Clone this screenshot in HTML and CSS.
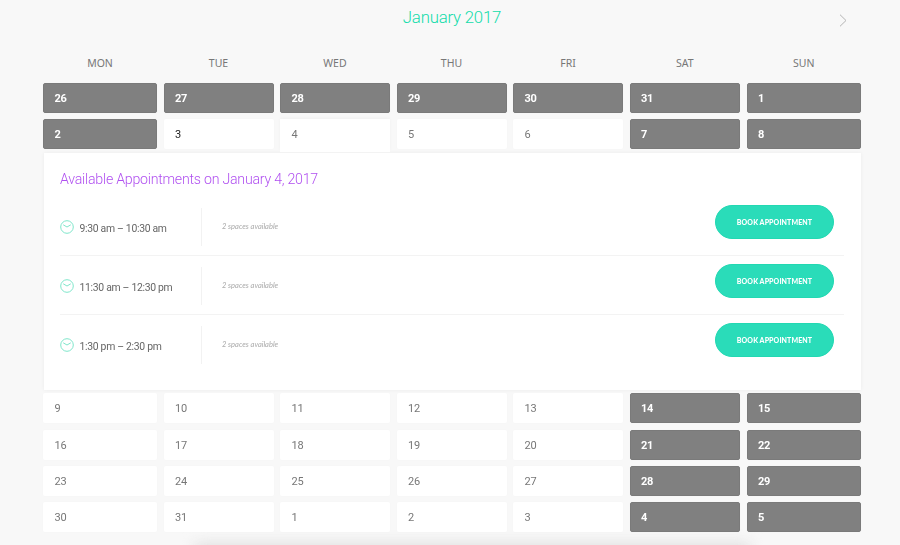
FILE: index.html
```html
<!DOCTYPE html>
<html lang="en">
<head>
<meta charset="utf-8">
<title>January 2017</title>
<link rel="stylesheet" href="styles.css">
</head>
<body>
<main class="page">
  <header class="month">
    <span class="month-spacer"></span>
    <h1 class="month-title">January 2017</h1>
    <svg class="month-next" width="8" height="13" viewBox="0 0 8 13"><path d="M1 .7l6 5.8-6 5.8" fill="none" stroke="#b4b4b4" stroke-width="1"/></svg>
  </header>
  <div class="weekdays">
    <span>MON</span><span>TUE</span><span>WED</span><span>THU</span><span>FRI</span><span>SAT</span><span>SUN</span>
  </div>
  <section class="calendar">
    <div class="cell off">26</div><div class="cell off">27</div><div class="cell off">28</div><div class="cell off">29</div><div class="cell off">30</div><div class="cell off">31</div><div class="cell off">1</div>
    <div class="cell off">2</div><div class="cell dark">3</div><div class="cell selected">4</div><div class="cell">5</div><div class="cell">6</div><div class="cell off">7</div><div class="cell off">8</div>
    <div class="panel">
      <h2 class="panel-title">Available Appointments on January 4, 2017</h2>
      <div class="slot">
        <div class="slot-time">
          <svg class="clock" width="14" height="14" viewBox="0 0 14 14"><circle cx="7" cy="7" r="6.3" fill="none" stroke="#7fe6cb" stroke-width="1"/><path d="M3.2 4.8L7 7l3.8-2.2" fill="none" stroke="#7fe6cb" stroke-width="1"/></svg>
          <span>9:30 am – 10:30 am</span>
        </div>
        <div class="slot-spaces">2 spaces available</div>
        <button class="book">BOOK APPOINTMENT</button>
      </div>
      <div class="slot">
        <div class="slot-time">
          <svg class="clock" width="14" height="14" viewBox="0 0 14 14"><circle cx="7" cy="7" r="6.3" fill="none" stroke="#7fe6cb" stroke-width="1"/><path d="M3.2 4.8L7 7l3.8-2.2" fill="none" stroke="#7fe6cb" stroke-width="1"/></svg>
          <span>11:30 am – 12:30 pm</span>
        </div>
        <div class="slot-spaces">2 spaces available</div>
        <button class="book">BOOK APPOINTMENT</button>
      </div>
      <div class="slot">
        <div class="slot-time">
          <svg class="clock" width="14" height="14" viewBox="0 0 14 14"><circle cx="7" cy="7" r="6.3" fill="none" stroke="#7fe6cb" stroke-width="1"/><path d="M3.2 4.8L7 7l3.8-2.2" fill="none" stroke="#7fe6cb" stroke-width="1"/></svg>
          <span>1:30 pm – 2:30 pm</span>
        </div>
        <div class="slot-spaces">2 spaces available</div>
        <button class="book">BOOK APPOINTMENT</button>
      </div>
    </div>
    <div class="cell">9</div><div class="cell">10</div><div class="cell">11</div><div class="cell">12</div><div class="cell">13</div><div class="cell off">14</div><div class="cell off">15</div>
    <div class="cell">16</div><div class="cell">17</div><div class="cell">18</div><div class="cell">19</div><div class="cell">20</div><div class="cell off">21</div><div class="cell off">22</div>
    <div class="cell">23</div><div class="cell">24</div><div class="cell">25</div><div class="cell">26</div><div class="cell">27</div><div class="cell off">28</div><div class="cell off">29</div>
    <div class="cell">30</div><div class="cell">31</div><div class="cell">1</div><div class="cell">2</div><div class="cell">3</div><div class="cell off">4</div><div class="cell off">5</div>
  </section>
  <div class="floor-shadow"></div>
</main>
</body>
</html>
```
FILE: styles.css
```css
* { box-sizing: border-box; }
html, body { margin: 0; height: 100%; }
body {
  background: #f8f8f8;
  font-family: Roboto, "Noto Sans", sans-serif;
  color: #666;
  overflow: hidden;
}
.page {
  position: relative;
  height: 545px;
  overflow: hidden;
  padding: 0 39px 0 43px;
}
.month {
  display: grid;
  grid-template-columns: 1fr auto 1fr;
  align-items: center;
  height: 35px;
}
.month-title {
  margin: 0;
  font-size: 16.8px;
  font-weight: 300;
  letter-spacing: -.2px;
  color: #12dcaa;
  line-height: 35px;
}
.month-next {
  justify-self: end;
  margin: 5px 14px 0 0;
}
.weekdays {
  display: grid;
  grid-template-columns: 114px 110px 110px 110px 110px 110.5px 114.5px;
  column-gap: 6.5px;
  height: 48px;
  padding-top: 19px;
  font-family: "Noto Sans", sans-serif;
  font-size: 10.5px;
  line-height: 18px;
  text-align: center;
  color: #777;
}
.calendar {
  display: grid;
  grid-template-columns: 114px 110px 110px 110px 110px 110.5px 114.5px;
  column-gap: 6.5px;
  row-gap: 6.3px;
  grid-template-rows: 30px 30px 231.5px 30px 30px 30px 30px;
  margin-top: .4px;
  will-change: transform;
}
.cell {
  padding: 1px 0 0 11.5px;
  font-size: 11px;
  letter-spacing: -.2px;
  line-height: 30px;
  background: #fff;
  border-radius: 2px;
  color: #777;
  box-shadow: 0 0 2px rgba(0, 0, 0, .02);
}
.cell.off {
  background: #808080;
  border: 1px solid #7a7a7a;
  padding-left: 10.5px;
  line-height: 28px;
  color: #fff;
  font-weight: 700;
}
.cell.dark { color: #222; }
.cell.selected {
  position: relative;
  z-index: 1;
  height: 33px;
  border-radius: 0;
  box-shadow: 0 -1px 3px rgba(0, 0, 0, .03);
}
.panel {
  grid-column: 1 / -1;
  height: 237px;
  margin: -3px 0 -3px 1px;
  padding: 0 17px 0 16px;
  background: #fff;
  box-shadow: 0 0 4px rgba(0, 0, 0, .05);
}
.panel-title {
  margin: 0;
  height: 44px;
  padding-top: 15px;
  font-size: 14.2px;
  font-weight: 300;
  letter-spacing: -.25px;
  line-height: 22px;
  color: #b050f0;
}
.slot {
  display: flex;
  align-items: center;
  height: 59px;
  border-bottom: 1px solid #f3f3f3;
}
.slot:last-child { border-bottom-color: transparent; }
.slot-time {
  display: flex;
  align-items: center;
  gap: 5.5px;
  width: 142px;
  height: 38px;
  padding-top: 3px;
  margin-top: 2px;
  border-right: 1px solid #f2f2f2;
  font-size: 10.4px;
  letter-spacing: -.3px;
  color: #666;
}
.clock { margin-top: -2px; }
.slot-spaces {
  flex: 1;
  padding: 1px 0 0 20px;
  font-family: "Lato", sans-serif;
  font-size: 7.5px;
  font-style: italic;
  color: #aaa;
}
.book {
  width: 119px;
  height: 34px;
  margin: -8px 10px 0 0;
  border: 1px solid #22d8b2;
  border-radius: 17px;
  background: #2adcb9;
  color: #fff;
  font-family: "Lato", sans-serif;
  font-size: 7px;
  font-weight: 900;
  letter-spacing: .1px;
}
.floor-shadow {
  position: absolute;
  left: 195px;
  right: 150px;
  top: 543px;
  height: 18px;
  background: #e0e0e0;
  filter: blur(7px);
  z-index: -1;
}
```
